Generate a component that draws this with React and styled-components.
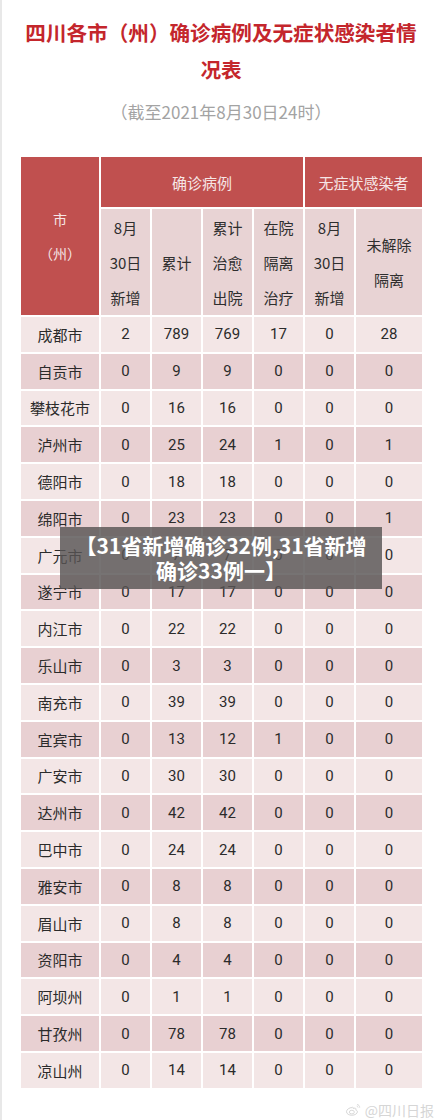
import React from 'react';
import styled, { createGlobalStyle } from 'styled-components';

const GlobalStyle = createGlobalStyle`
  html, body {
    margin: 0;
    padding: 0;
    background: #fff;
  }
  body {
    font-family: "Roboto", "Noto Sans CJK SC", sans-serif;
  }
`;

const rows = [
  ['成都市', 2, 789, 769, 17, 0, 28],
  ['自贡市', 0, 9, 9, 0, 0, 0],
  ['攀枝花市', 0, 16, 16, 0, 0, 0],
  ['泸州市', 0, 25, 24, 1, 0, 1],
  ['德阳市', 0, 18, 18, 0, 0, 0],
  ['绵阳市', 0, 23, 23, 0, 0, 1],
  ['广元市', 0, 7, 7, 0, 0, 0],
  ['遂宁市', 0, 17, 17, 0, 0, 0],
  ['内江市', 0, 22, 22, 0, 0, 0],
  ['乐山市', 0, 3, 3, 0, 0, 0],
  ['南充市', 0, 39, 39, 0, 0, 0],
  ['宜宾市', 0, 13, 12, 1, 0, 0],
  ['广安市', 0, 30, 30, 0, 0, 0],
  ['达州市', 0, 42, 42, 0, 0, 0],
  ['巴中市', 0, 24, 24, 0, 0, 0],
  ['雅安市', 0, 8, 8, 0, 0, 0],
  ['眉山市', 0, 8, 8, 0, 0, 0],
  ['资阳市', 0, 4, 4, 0, 0, 0],
  ['阿坝州', 0, 1, 1, 0, 0, 0],
  ['甘孜州', 0, 78, 78, 0, 0, 0],
  ['凉山州', 0, 14, 14, 0, 0, 0],
];

const App = () => {
  return (
    <Page>
      <GlobalStyle />
      <Title>四川各市（州）确诊病例及无症状感染者情况表</Title>
      <SubTitle>（截至2021年8月30日24时）</SubTitle>

      <TableWrap>
        <Grid>
          <CityHead>
            <span>市</span>
            <span>（州）</span>
          </CityHead>
          <GroupHead span={4}>确诊病例</GroupHead>
          <GroupHead span={2}>无症状感染者</GroupHead>

          <SubHead>
            <span>8月</span>
            <span>30日</span>
            <span>新增</span>
          </SubHead>
          <SubHead>
            <span>累计</span>
          </SubHead>
          <SubHead>
            <span>累计</span>
            <span>治愈</span>
            <span>出院</span>
          </SubHead>
          <SubHead>
            <span>在院</span>
            <span>隔离</span>
            <span>治疗</span>
          </SubHead>
          <SubHead>
            <span>8月</span>
            <span>30日</span>
            <span>新增</span>
          </SubHead>
          <SubHead>
            <span>未解除</span>
            <span>隔离</span>
          </SubHead>

          {rows.map((row, i) =>
            row.map((cell, j) => (
              <Cell key={`${i}-${j}`} dark={i % 2 === 1} city={j === 0}>
                {cell}
              </Cell>
            ))
          )}
        </Grid>

        <Banner>
          <span>【31省新增确诊32例,31省新增</span>
          <span>确诊33例一】</span>
        </Banner>
      </TableWrap>

      <Footer>
        <WeiboMark viewBox="0 0 24 20" width="17" height="14">
          <path
            d="M10 6.5c-4 0-8 2.8-8 6 0 3 3.6 5 7.6 5 4.6 0 8-2.4 8-5 0-1.6-1.6-2.2-2.4-2.4.6-1.4.4-2.6-1-2.8-1-.1-2.2.4-2.6.6.2-1 0-1.6-.6-1.8-.3-.1-.6 0-1 .4"
            fill="none"
            stroke="#d2d2d2"
            strokeWidth="1.3"
          />
          <ellipse cx="9.6" cy="13" rx="3.6" ry="2.6" fill="none" stroke="#d2d2d2" strokeWidth="1.2" />
          <path d="M17 2.2c2.4.2 4 2 3.8 4.4M16.6 4.4c1.2.1 2 1 1.9 2.1" fill="none" stroke="#d2d2d2" strokeWidth="1.2" />
        </WeiboMark>
        <FooterText>@四川日报</FooterText>
      </Footer>
    </Page>
  );
};

const Page = styled.div`
  width: 440px;
  min-height: 1120px;
  box-sizing: border-box;
  border-left: 2px solid #e8e8e8;
  padding-top: 14px;
  background: #fff;
`;

const Title = styled.h1`
  margin: 0 auto;
  width: 400px;
  text-align: center;
  font-family: "Noto Sans CJK SC", sans-serif;
  font-weight: 700;
  font-size: 20.6px;
  line-height: 37px;
  color: #c4262c;
`;

const SubTitle = styled.div`
  margin-top: 12px;
  text-align: center;
  font-family: "Noto Sans CJK SC", sans-serif;
  font-size: 17px;
  line-height: 24px;
  color: #a3a3a3;
`;

const TableWrap = styled.div`
  position: relative;
  margin: 33px 0 0 19px;
  width: 401px;
`;

const Grid = styled.div`
  display: grid;
  grid-template-columns: 78px 49px 49px 49px 49px 49px 66px;
  grid-template-rows: 50px 106px;
  grid-auto-rows: 34.8px;
  gap: 2px;
  font-family: "Roboto", "Noto Sans CJK SC", sans-serif;
`;

const CityHead = styled.div`
  grid-row: span 2;
  background: #c0504f;
  color: #f6e6e6;
  font-family: "Noto Sans CJK SC", sans-serif;
  font-size: 14px;
  display: flex;
  flex-direction: column;
  align-items: center;
  justify-content: center;
  gap: 14px;
`;

const GroupHead = styled.div`
  grid-column: span ${(p) => p.span};
  background: #c0504f;
  color: #f6e6e6;
  font-family: "Noto Sans CJK SC", sans-serif;
  font-size: 15px;
  display: flex;
  align-items: center;
  justify-content: center;
`;

const SubHead = styled.div`
  background: #e8d3d4;
  color: #2e2e2e;
  font-family: "Noto Sans CJK SC", sans-serif;
  font-size: 15px;
  line-height: 35px;
  display: flex;
  flex-direction: column;
  align-items: center;
  justify-content: center;
`;

const Cell = styled.div`
  background: ${(p) => (p.dark ? '#e8d0d2' : '#f3e6e6')};
  color: #2b2b2b;
  font-size: 15px;
  display: flex;
  align-items: center;
  justify-content: center;
  font-family: ${(p) => (p.city ? '"Noto Sans CJK SC", sans-serif' : '"Roboto", "Noto Sans CJK SC", sans-serif')};
`;

const Banner = styled.div`
  position: absolute;
  left: 39px;
  top: 370px;
  width: 322px;
  height: 62px;
  box-sizing: border-box;
  background: rgba(88, 84, 84, 0.82);
  color: #fff;
  font-family: "Noto Sans CJK SC", sans-serif;
  font-weight: 700;
  font-size: 21px;
  line-height: 25px;
  display: flex;
  flex-direction: column;
  align-items: center;
  justify-content: center;
`;

const Footer = styled.div`
  display: flex;
  justify-content: flex-end;
  align-items: center;
  gap: 3px;
  padding: 12px 6px 0 0;
`;

const WeiboMark = styled.svg`
  display: block;
`;

const FooterText = styled.span`
  font-family: "Noto Sans CJK SC", sans-serif;
  font-size: 14px;
  color: #d6d6d6;
`;

export default App;
